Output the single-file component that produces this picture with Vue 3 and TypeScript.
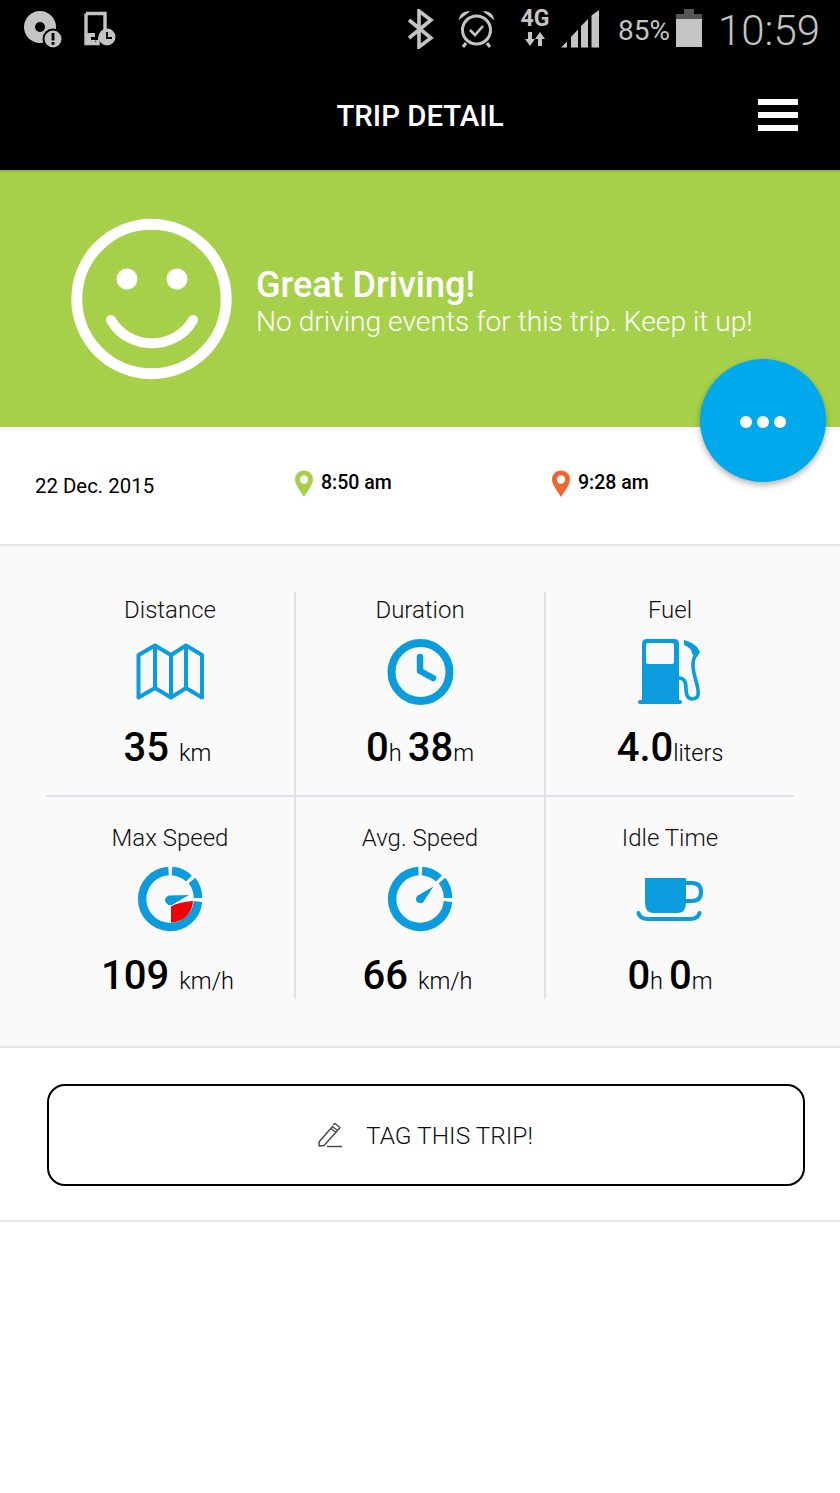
<script setup lang="ts">
interface Part { num: string; unit: string; gap?: boolean }
interface Stat { label: string; icon: string; parts: Part[] }

const stats: Stat[] = [
  { label: 'Distance', icon: 'map', parts: [{ num: '35', unit: 'km', gap: true }] },
  { label: 'Duration', icon: 'clock', parts: [{ num: '0', unit: 'h' }, { num: '38', unit: 'm' }] },
  { label: 'Fuel', icon: 'fuel', parts: [{ num: '4.0', unit: 'liters' }] },
  { label: 'Max Speed', icon: 'max', parts: [{ num: '109', unit: 'km/h', gap: true }] },
  { label: 'Avg. Speed', icon: 'avg', parts: [{ num: '66', unit: 'km/h', gap: true }] },
  { label: 'Idle Time', icon: 'cup', parts: [{ num: '0', unit: 'h' }, { num: '0', unit: 'm' }] },
]
</script>

<template>
  <div class="page">
    <header class="top">
      <div class="status">
        <div class="status-left">
          <svg width="42" height="40" viewBox="23 10 42 40">
            <circle cx="40" cy="27" r="16" fill="#c4c4c4" />
            <circle cx="40" cy="27" r="5" fill="#000" />
            <circle cx="53" cy="39" r="10.5" fill="#000" />
            <circle cx="53" cy="39" r="8.5" fill="#c4c4c4" />
            <rect x="51.6" y="33" width="2.8" height="7.5" fill="#000" />
            <rect x="51.6" y="42" width="2.8" height="2.8" fill="#000" />
          </svg>
          <svg width="34" height="38" viewBox="83 10 34 38">
            <path d="M86 13.5H105V30M86 13.5V43.5H98V39H94" fill="none" stroke="#c4c4c4" stroke-width="3.4" />
            <rect x="85" y="33" width="10" height="12" fill="#c4c4c4" />
            <rect x="91" y="37" width="7" height="3" fill="#000" />
            <circle cx="107" cy="37" r="8.5" fill="#c4c4c4" />
            <path d="M107 32V38H112" fill="none" stroke="#000" stroke-width="1.8" />
          </svg>
        </div>
        <div class="status-right">
          <svg class="s-bt" width="28" height="40" viewBox="406 9 28 40">
            <path d="M409 20L431 38L419 47V11L431 20L409 38" fill="none" stroke="#c4c4c4" stroke-width="3.6" />
          </svg>
          <svg class="s-alarm" width="38" height="40" viewBox="458 9 38 40">
            <circle cx="476.500" cy="30" r="14" fill="none" stroke="#c4c4c4" stroke-width="3" />
            <path d="M470 30L475 35L483 26" fill="none" stroke="#c4c4c4" stroke-width="2.6" />
            <path d="M460 18Q462 12 468 12Z M493 18Q491 12 485 12Z" fill="#c4c4c4" stroke="#c4c4c4" stroke-width="1.600" />
            <path d="M466 43L463 47M487 43L490 47" stroke="#c4c4c4" stroke-width="3" />
          </svg>
          <div class="s-net">
            <span class="s-4g">4G</span>
            <svg width="24" height="16" viewBox="0 0 24 16">
              <path d="M5 1H9V8H12L7 15L2 8H5ZM15 15H19V8H22L17 1L12 8H15Z" fill="#c4c4c4" />
            </svg>
          </div>
          <svg class="s-signal" width="38" height="38" viewBox="562 10 38 38">
            <path d="M562 47.500L568 41.500V47.500ZM572 47.500V37L579 29.500V47.500ZM582 47.500V26L589 19V47.500ZM592.500 47.500V15.500L600 10V47.500Z" fill="#c4c4c4" />
          </svg>
          <span class="s-pct">85%</span>
          <svg class="s-batt" width="26" height="38" viewBox="0 0 26 38">
            <path d="M8 0H18V5H26V10H0V5H8Z" fill="#555" />
            <rect y="10" width="26" height="28" fill="#c4c4c4" />
          </svg>
          <span class="s-time">10:59</span>
        </div>
      </div>
      <div class="bar">
        <h1 class="title">TRIP DETAIL</h1>
        <div class="burger"><i></i><i></i><i></i></div>
      </div>
    </header>

    <section class="banner">
      <svg class="smile" width="162" height="162" viewBox="70 217 162 162">
        <circle cx="151.500" cy="298" r="74.700" fill="none" stroke="#fff" stroke-width="11" />
        <circle cx="127" cy="278" r="10.500" fill="#fff" />
        <circle cx="177" cy="278" r="10.500" fill="#fff" />
        <path d="M111 319C128 350 176 350 193 319" fill="none" stroke="#fff" stroke-width="10" stroke-linecap="round" />
      </svg>
      <div class="banner-text">
        <div class="great">Great Driving!</div>
        <div class="sub">No driving events for this trip. Keep it up!</div>
      </div>
    </section>

    <button class="fab"><i></i><i></i><i></i></button>

    <section class="info">
      <div class="date">22 Dec. 2015</div>
      <div class="when">
        <svg width="20" height="28" viewBox="0 0 20 28">
          <path d="M10 0.500C4.700 0.500 1 4.500 1 9.500C1 15 6.500 21 10 27C13.500 21 19 15 19 9.500C19 4.500 15.300 0.500 10 0.500Z" fill="#a6d04a" />
          <circle cx="10" cy="9.500" r="4.200" fill="#fff" />
        </svg>
        <span>8:50 am</span>
      </div>
      <div class="when">
        <svg width="20" height="28" viewBox="0 0 20 28">
          <path d="M10 0.500C4.700 0.500 1 4.500 1 9.500C1 15 6.500 21 10 27C13.500 21 19 15 19 9.500C19 4.500 15.300 0.500 10 0.500Z" fill="#f26430" />
          <circle cx="10" cy="9.500" r="4.200" fill="#fff" />
        </svg>
        <span>9:28 am</span>
      </div>
    </section>

    <section class="stats">
      <div class="grid">
        <div v-for="(s, i) in stats" :key="s.label" class="cell" :class="{ lower: i > 2, last: i % 3 === 2 }">
          <div class="label">{{ s.label }}</div>
          <div class="icon">
            <svg v-if="s.icon === 'map'" width="70" height="62" viewBox="135 641 70 62">
              <path d="M138.500 655L155 645.500L171 655L186 645.500L202 655V697.500L186 688L171 697.500L155 688L138.500 697.500ZM155 645.500V688M171 655V697.500M186 645.500V688" fill="none" stroke="#0b9cdd" stroke-width="4" stroke-linejoin="round" />
            </svg>
            <svg v-else-if="s.icon === 'clock'" width="70" height="70" viewBox="385 637 70 70">
              <circle cx="420.500" cy="672" r="29" fill="none" stroke="#0b9cdd" stroke-width="8" />
              <path d="M420 657V671L433 678" fill="none" stroke="#0b9cdd" stroke-width="6.500" stroke-linecap="round" stroke-linejoin="round" />
            </svg>
            <svg v-else-if="s.icon === 'fuel'" width="70" height="70" viewBox="635 637 70 70">
              <path fill-rule="evenodd" d="M647 639H674Q679 639 679 644V700H680Q682 700 682 702Q682 704 680 704H640Q638 704 638 702Q638 700 640 700H642V644Q642 639 647 639ZM648 643Q646 643 646 645V662Q646 664 648 664H672Q674 664 674 662V645Q674 643 672 643Z" fill="#0b9cdd" />
              <path d="M679 678C684 678 686 682 686 688C686 696 688 699 692 699C697 699 699 696 698 690C697 682 693 674 693 665C693 660 694 657 696 655" fill="none" stroke="#0b9cdd" stroke-width="3.600" />
              <path d="M684 640Q692 642 697 647L700 652L697 657L692 654Q692 648 684 645Z" fill="#0b9cdd" />
            </svg>
            <svg v-else-if="s.icon === 'max'" width="70" height="70" viewBox="135 864 70 70">
              <path d="M168.500 871A28 28 0 1 0 198 901.500" fill="none" stroke="#0b9cdd" stroke-width="8.500" />
              <path d="M172 871A28 28 0 0 1 189 878.500M192 880.500A28 28 0 0 1 198 898" fill="none" stroke="#0b9cdd" stroke-width="8.500" />
              <path d="M171 922.500V906.500Q178 902 193 901A22 22 0 0 1 171 922.500Z" fill="#f00000" />
              <path d="M189 895L169 895.500Q164.500 897 165 901Q167 906 172 905Z" fill="#0b9cdd" />
            </svg>
            <svg v-else-if="s.icon === 'avg'" width="70" height="70" viewBox="385 864 70 70">
              <path d="M418.500 871A28 28 0 1 0 448 901.500" fill="none" stroke="#0b9cdd" stroke-width="8.500" />
              <path d="M422 871A28 28 0 0 1 439 878.500M442 880.500A28 28 0 0 1 448 898" fill="none" stroke="#0b9cdd" stroke-width="8.500" />
              <path d="M433.500 886.500L417 896Q415 900 417 902Q420 904 423 902.500Z" fill="#0b9cdd" />
            </svg>
            <svg v-else-if="s.icon === 'cup'" width="70" height="50" viewBox="635 874 70 50">
              <path d="M645 878H686V903Q686 913 677 913H654Q645 913 645 903Z" fill="#0b9cdd" />
              <path d="M685 883H692Q701 883 701 892Q701 901 692 901H684" fill="none" stroke="#0b9cdd" stroke-width="4" />
              <path d="M638.500 913Q640 919 648 919H690Q698 919 699.500 913" fill="none" stroke="#0b9cdd" stroke-width="4" stroke-linecap="round" />
            </svg>
          </div>
          <div class="value">
            <template v-for="p in s.parts" :key="p.unit">
              <b>{{ p.num }}</b><span class="unit" :class="{ gap: p.gap }">{{ p.unit }}</span>
            </template>
          </div>
        </div>
      </div>
    </section>

    <section class="tag-row">
      <button class="tag">
        <svg width="26" height="26" viewBox="0 0 26 26">
          <path d="M2 20L15.500 4.500L20.500 8.500L7 23.500L2 24ZM14 6.500L19 10.500M16 3L18 1.500L23 5.500L21 8" fill="none" stroke="#444" stroke-width="1.400" stroke-linejoin="round" />
          <path d="M10 24.500H25" stroke="#444" stroke-width="1.400" />
        </svg>
        <span>TAG THIS TRIP!</span>
      </button>
    </section>
  </div>
</template>

<style scoped>
.page {
  position: relative;
  width: 840px;
  height: 1493px;
  background: #fff;
  overflow: hidden;
  font-family: Roboto, "Liberation Sans", sans-serif;
  color: #000;
}

.top {
  height: 170px;
  background: #000;
}

.status {
  height: 62px;
  display: flex;
  justify-content: space-between;
  padding: 10px 20px 0 23px;
  box-sizing: border-box;
}

.status-left {
  display: flex;
  align-items: flex-start;
  gap: 18px;
}

.status-right {
  display: flex;
  align-items: flex-start;
  height: 40px;
}

.s-bt { margin-top: -1px; }
.s-alarm { margin-left: 24px; margin-top: -1px; }

.s-net {
  width: 34px;
  margin-left: 22px;
  display: flex;
  flex-direction: column;
  align-items: center;
}

.s-net svg { margin-top: 1px; }

.s-4g {
  font-size: 23px;
  line-height: 18px;
  font-weight: 700;
  color: #c4c4c4;
  height: 20px;
}

.s-signal { margin-left: 9px; }

.s-pct {
  margin-left: 19px;
  margin-top: 5px;
  font-size: 28px;
  line-height: 32px;
  color: #c4c4c4;
}

.s-batt { margin-left: 6px; margin-top: -1px; }

.s-time {
  margin-left: 16px;
  margin-top: -1px;
  font-size: 42px;
  line-height: 44px;
  font-weight: 300;
  color: #c4c4c4;
}

.bar {
  height: 108px;
  position: relative;
  display: flex;
  align-items: center;
  justify-content: center;
}

.title {
  margin: 0;
  font-size: 29.4px;
  font-weight: 500;
  color: #fff;
}

.burger {
  position: absolute;
  left: 758px;
  top: 37px;
  width: 40px;
  display: flex;
  flex-direction: column;
  gap: 7px;
}

.burger i {
  display: block;
  height: 6px;
  background: #fff;
}

.banner {
  height: 257px;
  background: #a6d04a;
  display: flex;
  align-items: center;
  padding-left: 70px;
  box-sizing: border-box;
  box-shadow: inset 0 3px 3px -2px rgba(0, 0, 0, 0.2);
}

.smile { margin-right: 25px; }

.banner-text {
  color: #fff;
  margin-top: 10px;
  margin-left: -1px;
}

.great {
  font-size: 36px;
  line-height: 36px;
  font-weight: 500;
}

.sub {
  font-size: 28.2px;
  line-height: 38px;
  font-weight: 300;
}

.fab {
  position: absolute;
  left: 700px;
  top: 359px;
  width: 126px;
  height: 123px;
  border: 0;
  border-radius: 50%;
  background: #00a9ec;
  box-shadow: 0 3px 6px rgba(0, 0, 0, 0.3);
  display: flex;
  align-items: center;
  justify-content: center;
  gap: 5px;
  padding: 2px 0 0;
}

.fab i {
  width: 12px;
  height: 12px;
  border-radius: 50%;
  background: #fff;
}

.info {
  height: 119px;
  display: grid;
  grid-template-columns: 259px 257px 1fr;
  padding-left: 35px;
  box-sizing: border-box;
  border-bottom: 2px solid #e6e6e6;
}

.date {
  margin-top: 47px;
  font-size: 20.4px;
  line-height: 24px;
}

.when {
  margin-top: 43px;
  display: flex;
  align-items: flex-start;
  gap: 7px;
  font-size: 19.5px;
  line-height: 26px;
  font-weight: 500;
}

.stats {
  height: 502px;
  box-sizing: border-box;
  background: #fafafa;
  border-bottom: 2px solid #e6e6e6;
  padding: 46px 46px 0;
}

.grid {
  display: grid;
  grid-template-columns: 250px 250px 248px;
}

.cell {
  height: 205px;
  border-right: 2px solid #e0e4ea;
  border-bottom: 2px solid #e0e4ea;
  box-sizing: border-box;
  display: flex;
  flex-direction: column;
  align-items: center;
  padding-top: 3px;
}

.cell.lower {
  height: 202px;
  border-bottom: 0;
  padding-top: 26px;
}

.cell.last { border-right: 0; }

.label {
  flex: none;
  font-size: 24px;
  line-height: 30px;
  font-weight: 300;
  color: #111;
}

.icon {
  flex: none;
  height: 70px;
  margin-top: 12px;
  display: flex;
  align-items: center;
  justify-content: center;
}

.cell.lower .icon { margin-top: 11px; }

.value {
  flex: none;
  margin-top: 17px;
  line-height: 48px;
  white-space: nowrap;
}

.cell.lower .value { margin-top: 18px; }

.value b {
  font-size: 40px;
  font-weight: 500;
}

.unit {
  font-size: 23.5px;
  font-weight: 300;
  margin-right: 6px;
}

.unit.gap { margin-left: 10px; margin-right: 5px; }

.value .unit:last-child:not(.gap) { margin-right: 0; }

.tag-row {
  height: 174px;
  box-sizing: border-box;
  border-bottom: 2px solid #e6e6e6;
  padding: 36px 35px 0 47px;
}

.tag {
  width: 758px;
  height: 102px;
  border: 2px solid #000;
  border-radius: 18px;
  background: #fff;
  display: flex;
  align-items: center;
  justify-content: center;
  gap: 23px;
  font-family: inherit;
  font-size: 24.5px;
  font-weight: 300;
  color: #111;
  padding: 0 2px 0 0;
}
</style>
